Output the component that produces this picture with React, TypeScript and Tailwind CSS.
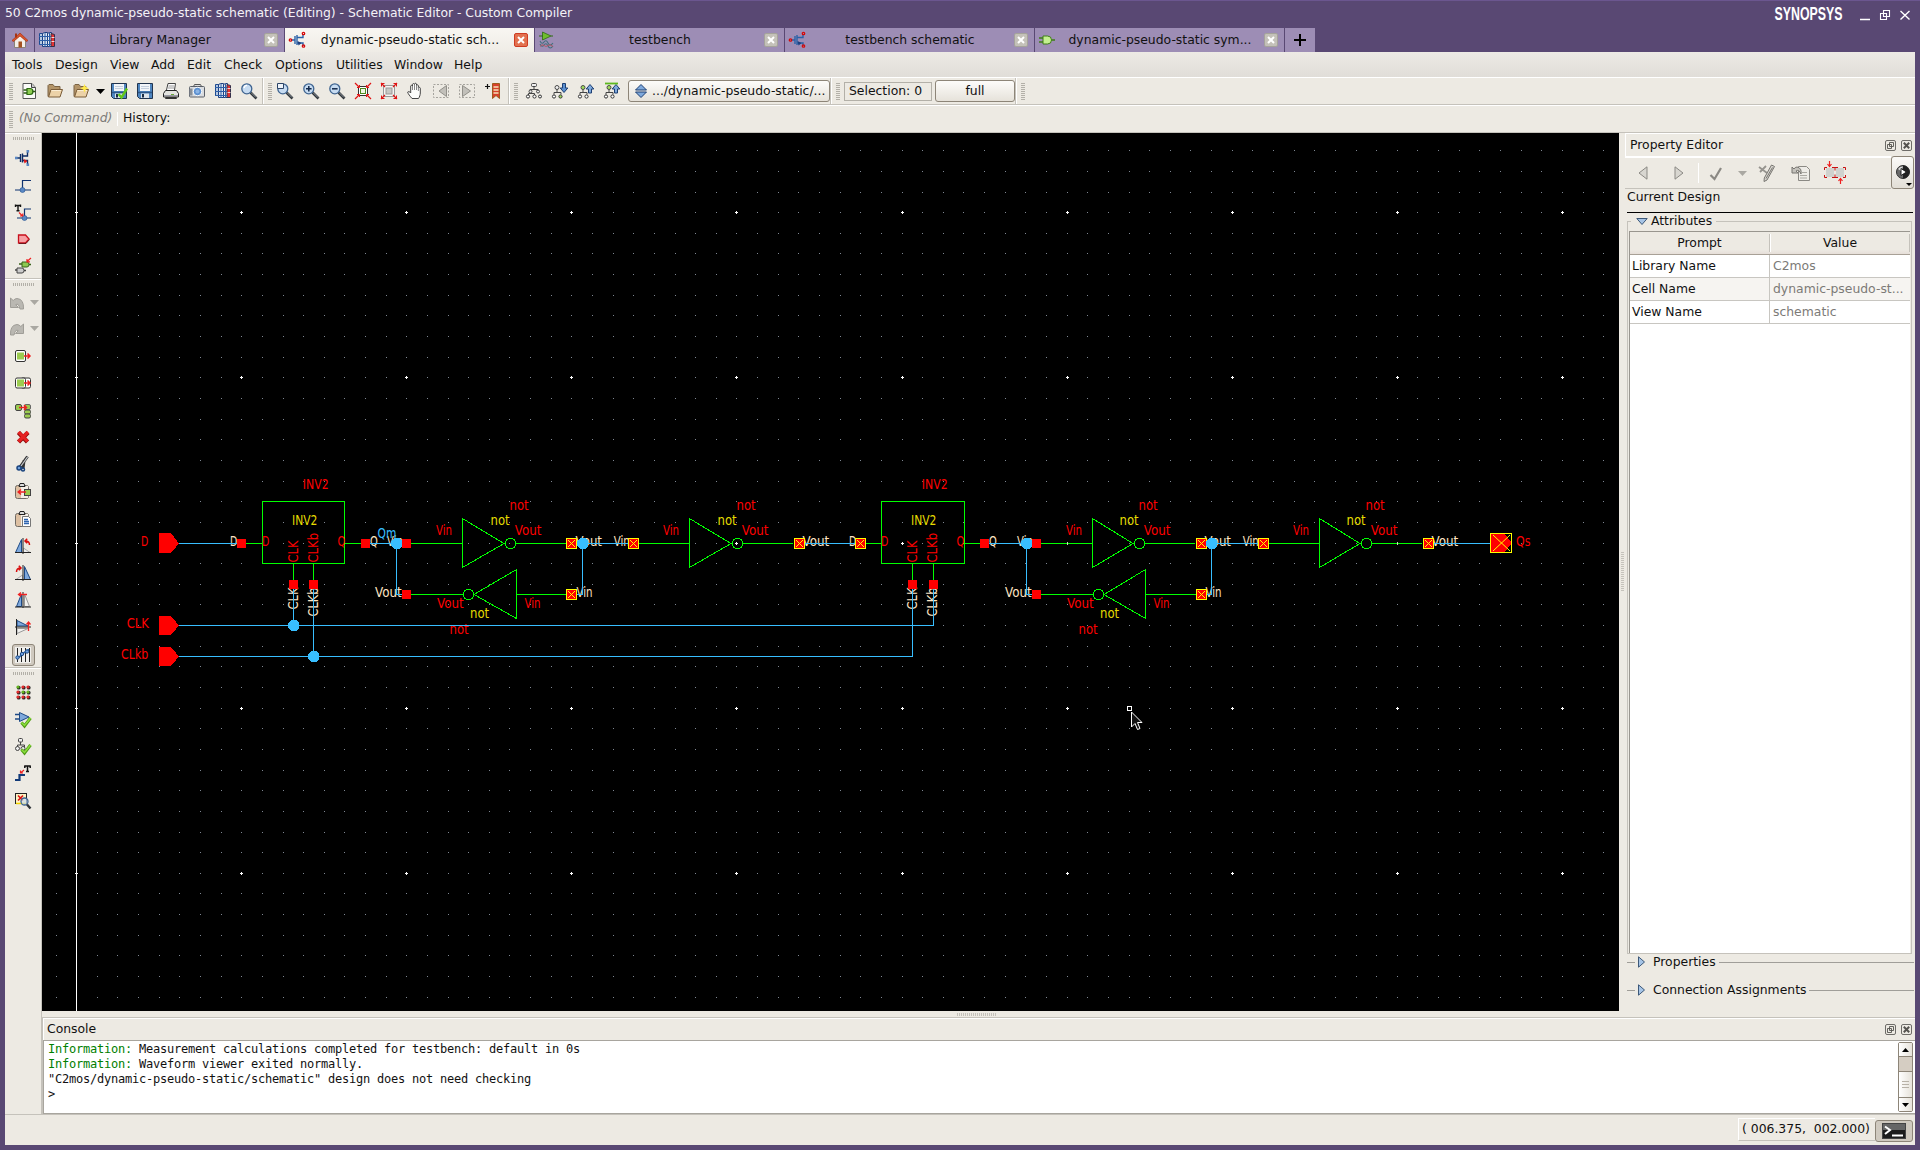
import React from "react";

type Kids = { children?: React.ReactNode };

/* ---------- shared helpers ---------- */

function Ic({ children, s = 16, h }: Kids & { s?: number; h?: number }) {
  return (
    <svg width={s} height={h ?? s} viewBox={`0 0 ${s} ${h ?? s}`} className="block shrink-0 overflow-visible" fill="none">
      {children}
    </svg>
  );
}

function Grip() {
  return (
    <div className="mr-[3px] ml-[4px] flex h-[17px] w-[4px] shrink-0 flex-col justify-between">
      {Array.from({ length: 9 }, (_, i) => (
        <div key={i} className="h-px w-full bg-[#b3b0a8]" />
      ))}
    </div>
  );
}

function GripH() {
  return (
    <div className="flex h-[3px] w-[21px] shrink-0 justify-between">
      {Array.from({ length: 11 }, (_, i) => (
        <div key={i} className="h-full w-px bg-[#b3b0a8]" />
      ))}
    </div>
  );
}

function Cell({ children }: Kids) {
  return <div className="flex w-[26px] shrink-0 items-center justify-center">{children}</div>;
}

function Sep() {
  return <div className="h-[26px] w-[2px] shrink-0 border-l border-[#c5c2bb] bg-white" />;
}

/* ---------- top tool bar icons ---------- */

const Folder = ({ star }: { star?: boolean }) => (
  <Ic>
    <path d="M1 13.500V2.500L2 1.500h4l1.500 2h5.500V6" fill="#b39468" stroke="#7a6344" />
    <path d="M1.500 14L4 6.500h11.500L13 14z" fill="#ecd2a8" stroke="#7a5c38" />
    <path d="M4.500 7.500h9.500" stroke="#fbeed6" />
    {star && <path d="M11.500 1l1.300 3 3 1.300-3 1.300-1.300 3-1.300-3-3-1.300 3-1.300z" fill="#ffe94a" />}
  </Ic>
);
const Floppy = ({ check }: { check?: boolean }) => (
  <Ic>
    <path d="M.500.500h15v15h-13l-2-2z" fill="#4f86c0" stroke="#22344e" />
    <rect x="3" y="1" width="10" height="7" fill="#f2f5f9" />
    <path d="M4 3.500h8M4 5.500h8" stroke="#c3cedd" />
    <path d="M1 9.500h14" stroke="#2d5688" strokeWidth="1.500" />
    <rect x="4" y="10.500" width="8" height="4.500" fill="#dde3ea" />
    <rect x="5" y="11" width="2" height="3.500" fill="#1a2c44" />
    {check && <path d="M7.500 11l3 3.500 5.500-9" stroke="#62c81a" strokeWidth="2.400" />}
  </Ic>
);
const Mag = ({ sign, box }: { sign?: string; box?: boolean }) => (
  <Ic>
    <path d="M9.500 9.500l6 6" stroke="#2e3338" strokeWidth="2.600" />
    <path d="M10 9.500l5 5" stroke="#9aa3ab" strokeWidth="0.900" />
    <circle cx="5.800" cy="5.800" r="5" fill="#c7dcf2" stroke="#3f6490" strokeWidth="1.300" />
    {sign === "+" && <path d="M3 5.800h5.600M5.800 3v5.600" stroke="#12284a" strokeWidth="1.500" />}
    {sign === "-" && <path d="M3 5.800h5.600" stroke="#12284a" strokeWidth="1.500" />}
    {!sign && !box && <path d="M3 5a3.200 3.200 0 0 1 3-2.600" stroke="#fff" strokeWidth="1.400" />}
    {box && <path d="M.500.500h6v5h-6z" fill="#eef3f9" stroke="#2c4466" />}
  </Ic>
);
const LibBooks = () => (
  <Ic>
    <path d="M.500 1.500h4v11h-4z" fill="#b6c8e0" stroke="#1d4a90" />
    <path d="M3.500 1.500l2-1h3v14h-5z" fill="#dbe4f0" stroke="#1d3f80" />
    <path d="M8.500 1.500l2-1h2v14h-4z" fill="#e8edf4" stroke="#1d3f80" />
    <path d="M12 1.500l3.500 1v12H12z" fill="#e23434" stroke="#34304a" />
    <path d="M0 4.500h12M0 8.500h12M0 12.500h12M6 1v14M10.500 1v14" stroke="#2d5fa8" />
    <path d="M12.500 5.500h3M12.500 9.500h3" stroke="#f6d5d5" />
  </Ic>
);
const RedArrows = ({ out }: { out?: boolean }) => (
  <Ic>
    {out ? (
      <>
        <rect x="2.500" y="2.500" width="11" height="11" fill="#f6f5f2" stroke="#999" />
        <rect x="5" y="5" width="6" height="6" fill="#c8c8c4" stroke="#999" />
      </>
    ) : (
      <>
        <rect x="3.500" y="3.500" width="9" height="9" fill="#fff" stroke="#333" />
        <rect x="5.500" y="5.500" width="5" height="5" fill="#f2f8e8" stroke="#4d8a1c" />
      </>
    )}
    <path d="M0 0l4 4M16 0l-4 4M0 16l4-4M16 16l-4-4" stroke="#e01414" strokeWidth="1.200" />
    <path
      d={out ? "M.500 3.500v-3h3M12.500 .500h3v3M.500 12.500v3h3M12.500 15.500h3v-3" : "M4.500 2v2.500H2M11.500 2v2.500H14M4.500 14v-2.500H2M11.500 14v-2.500H14"}
      stroke="#e01414"
    />
  </Ic>
);
const Tree = ({ arrow }: { arrow?: "down" | "up" | "top" }) => (
  <Ic>
    {arrow ? (
      <>
        <circle cx="5" cy="4.500" r="2" fill={arrow === "down" ? "#eee" : "#9fdc5a"} stroke="#4a4a4a" />
        <path d="M5 6.500v3M2 11.500V9.500h7v2" stroke="#444" />
      </>
    ) : (
      <>
        <rect x="5.500" y="0.500" width="5" height="3" rx="1" fill="#eee" stroke="#444" />
        <path d="M8 4v2M4 8V6.500h8V8M2.500 12v-1.500h6V12" stroke="#444" />
        <circle cx="4.500" cy="8.500" r="1.500" fill="#eee" stroke="#444" />
        <circle cx="12" cy="8.500" r="1.500" fill="#eee" stroke="#444" />
        <circle cx="14" cy="13.500" r="1.500" fill="#eee" stroke="#333" />
      </>
    )}
    <circle cx="2" cy="13.500" r="1.600" fill="#fff" stroke="#333" />
    <circle cx="8.500" cy="13.500" r="1.600" fill={arrow === "down" ? "#9fdc5a" : "#fff"} stroke="#333" />
    {arrow === "down" && <path d="M10.500.500h3v4.500h2.300L12 9.500 8.200 5h2.300z" fill="#5b8fd0" stroke="#1d3f73" />}
    {(arrow === "up" || arrow === "top") && <path d="M10.500 10h3V6h2.300L12 1.500 8.200 6h2.300z" fill="#7fa9dc" stroke="#1d3f73" />}
    {arrow === "top" && <path d="M1 .500h13" stroke="#5cb81e" strokeWidth="1.800" />}
  </Ic>
);
const Printer = () => (
  <Ic>
    <path d="M3.500 7L5 .500h7.500L11.500 7" fill="#fff" stroke="#444" />
    <path d="M5.500 3h5.500M5 5h6" stroke="#999" />
    <path d="M2.500 7.500h11l2 3v3.500h-15v-3.500z" fill="#e4e4e0" stroke="#222" />
    <path d="M1 12.500h14" stroke="#9a9aa4" />
    <path d="M2.500 14.500h11v1h-11z" fill="#f4f4f0" stroke="#333" />
    <path d="M8 11.500h3" stroke="#6aa838" />
  </Ic>
);
const Camera = () => (
  <Ic>
    <path d="M4.500 3.500l1-2h6l1 2" fill="#ddd" stroke="#555" />
    <rect x="0.500" y="3.500" width="15" height="10.500" rx="1" fill="#dadcdf" stroke="#5a5f68" />
    <path d="M.500 5.500h3v7h-3" fill="#8a9098" />
    <circle cx="8.500" cy="8.500" r="4.200" fill="#5d90d0" stroke="#f6f8fb" />
    <circle cx="8.500" cy="8.500" r="2" fill="#8ab4e6" />
  </Ic>
);
const NewDoc = () => (
  <Ic>
    <path d="M2 .500h9l3.500 4v11H2z" fill="#fbfbf8" stroke="#555" />
    <path d="M10.500.500v4h4" fill="#ccc" stroke="#444" />
    <path d="M6 5.500h3a3 3 0 0 1 0 6H6z" fill="#8ccc50" stroke="#2d6c12" strokeWidth="1.200" />
    <path d="M2.500 7h3.500M2.500 10h3.500M11.500 8.500h3" stroke="#2d5c12" strokeWidth="1.400" />
  </Ic>
);
const Hand = () => (
  <Ic>
    <path
      d="M5 15.500C3 13 1 11 .700 9c.900-1 2-.300 3 1V3c.200-1 1.500-1 1.800 0V1.500c.200-1.200 1.700-1.200 2 0V1c.300-1 1.700-1 2 0v1.500c.400-1 1.700-.800 1.900.200V5c.400-1 1.800-.800 1.900.200V10c0 2-.800 4-1.800 5.500z"
      fill="#fdfdfb"
      stroke="#444"
    />
    <path d="M5.500 3v4M7.500 2v5M9.500 2.500V7M11.400 4v4" stroke="#888" />
  </Ic>
);
const DashNav = ({ right }: { right?: boolean }) => (
  <Ic>
    <rect x="0.500" y="1.500" width="15" height="13" stroke="#a5a39d" strokeDasharray="2 1.500" />
    {right ? <path d="M3.500 2.500v11l8-5.500z" fill="#c2c0ba" stroke="#92908a" /> : <path d="M13.500 2.500v11L6 8z" fill="#c2c0ba" stroke="#92908a" />}
  </Ic>
);
const Bookmark = () => (
  <Ic>
    <path d="M0 3.500h5M2.500 1v5" stroke="#111" strokeWidth="1.200" />
    <path d="M7.500.500h7v15l-3.500-3-3.500 3z" fill="#d8402c" stroke="#a05a1c" />
    <path d="M8.500 4h5M8.500 7h5M8.500 10h5" stroke="#f5e2b8" strokeWidth="1.400" />
  </Ic>
);
const Arrow = ({ c = "#000" }: { c?: string }) => (
  <svg width="9" height="5" viewBox="0 0 9 5" className="block shrink-0">
    <path d="M0 0h9L4.500 5z" fill={c} />
  </svg>
);

/* ---------- tab icons ---------- */

const Mos = ({ add }: { add?: boolean }) => (
  <Ic>
    <path
      d={add ? "M1 8h4M5.500 4v8M7.500 3.500v9M8 6h4.500V2M8 10.500h4.500v3.500" : "M3 8h3M6 4v8M8 3v10M8 5.500h6V2M8 11h6v3"}
      stroke={add ? "#0b2c66" : "#2a62a8"}
      strokeWidth="1.400"
    />
    <path d="M8.500 9l4 2-3 2.500z" fill={add ? "#e01818" : "#1c3f80"} />
    {add ? (
      <g fill="#5b88c4">
        <rect x="0" y="6.700" width="2.600" height="2.600" />
        <rect x="11.500" y="0" width="2.600" height="2.600" />
        <rect x="11.500" y="13.400" width="2.600" height="2.600" />
      </g>
    ) : (
      <g stroke="#d80808" strokeWidth="1.300">
        <circle cx="1.500" cy="8" r="1.200" />
        <circle cx="14.500" cy="1.500" r="1.200" />
        <circle cx="14.500" cy="14" r="1.200" />
      </g>
    )}
  </Ic>
);
const Home = () => (
  <Ic>
    <path d="M2.500 8v7.500h11V8L8 3z" fill="#f3efe8" stroke="#8a8378" />
    <path d="M0 8.500L8 1l8 7.500-1.500 1L8 4 1.500 9.500z" fill="#d9532c" stroke="#a63413" strokeWidth="0.700" />
    <rect x="3" y="1.500" width="2" height="4" fill="#a63413" />
    <rect x="6.500" y="9.500" width="3.500" height="6" fill="#a4511f" />
  </Ic>
);
const Wave = () => (
  <Ic>
    <path d="M3.500 0l8.500 4-8.500 4z" fill="#6fbe2c" stroke="#2f6a12" strokeWidth="0.800" />
    <path d="M0 4h4M12 4h2" stroke="#2f6a12" />
    <path d="M1 9q2 4 4 1t4 1 5 0M1 12q2 4 4 1t4 1 5 0" stroke="#42707c" strokeWidth="1.100" />
    <path d="M1 14.500q2-3 4-1t4 0 5 1" stroke="#b8505c" strokeWidth="0.900" />
  </Ic>
);
const SymIcon = () => (
  <Ic>
    <path d="M0 6h4M0 10h4M11 8h5" stroke="#3f7c18" strokeWidth="1.500" />
    <path d="M4 4h4.500a4 4 0 0 1 0 8H4z" fill="#c4f090" stroke="#3f7c18" />
  </Ic>
);

function TabClose({ active }: { active?: boolean }) {
  return (
    <div
      className={
        active
          ? "flex h-[14px] w-[14px] items-center justify-center rounded-[2px] border border-[#cf3b22] bg-[#e2714f]"
          : "flex h-[14px] w-[14px] items-center justify-center rounded-[2px] border border-[#a5a39b] bg-[#c4c1b9]"
      }
    >
      <svg width="8" height="8" viewBox="0 0 8 8">
        <path d="M1 1l6 6M7 1L1 7" stroke="#fff" strokeWidth="2" />
      </svg>
    </div>
  );
}

function Tab({ icon, label, active }: { icon: React.ReactNode; label: string; active?: boolean }) {
  return (
    <div
      className={
        "flex w-[250px] shrink-0 items-center border-r border-[#594873] pr-[6px] pl-[4px] " +
        (active ? "bg-[linear-gradient(#f8f6f2,#efece6)]" : "bg-[#9d8db5]")
      }
    >
      {icon}
      <span className="flex-1 pl-[1px] text-center">{label}</span>
      <TabClose active={active} />
    </div>
  );
}

/* ---------- left tool bar ---------- */

const Tri = ({ flip }: { flip?: boolean }) => (
  <Ic>
    {flip ? (
      <>
        <path d="M9.500 1.500v13h6z" fill="#7fa9dc" stroke="#1d4a86" />
        <path d="M7.500 10L1 14.500h6.500z" fill="#eee" stroke="#aaa" />
      </>
    ) : (
      <>
        <path d="M6.500 1.500v13h-6z" fill="#7fa9dc" stroke="#1d4a86" />
        <path d="M8.500 10l6.500 4.500H8.500z" fill="#eee" stroke="#aaa" />
      </>
    )}
    <path d="M0 14.500h16M8 0v16" stroke="#222" />
    <path d={flip ? "M1.500 7q0-4 4-4M3.800 0.800L6 3 3.800 5.200" : "M14.500 7q0-4-4-4M12.200.800L10 3l2.200 2.200"} stroke="#d81010" strokeWidth="1.500" />
  </Ic>
);
const Clip = ({ page }: { page?: boolean }) => (
  <Ic>
    <rect x="0.500" y="2.500" width="13" height="13" rx="2" fill="#ddc0a2" stroke="#6e6a64" />
    <rect x="6" y="3" width="7" height="12" fill="#f5efe8" />
    <path d="M4 3.500h6l-1-3H5z" fill="#ddd" stroke="#222" />
    {page ? (
      <>
        <path d="M7.500 5.500h6l2 2v8h-8z" fill="#fff" stroke="#777" />
        <path d="M9 8.500h4M9 10.500h5M9 12.500h5" stroke="#2e64b0" strokeWidth="1.300" />
      </>
    ) : (
      <>
        <rect x="9.500" y="6.500" width="6" height="6" fill="#9ccc50" stroke="#444" />
        <path d="M3 9h8M6 6.500L3.200 9 6 11.500" stroke="#e22" strokeWidth="1.500" />
      </>
    )}
  </Ic>
);
const GreenSq = ({ v }: { v: number }) => (
  <Ic>
    {v === 2 ? (
      <>
        <rect x="0.500" y="2.500" width="6" height="6" rx="1.500" fill="#9ccc50" stroke="#444" />
        <rect x="9.500" y="2.500" width="6" height="5" rx="1.500" fill="#9ccc50" stroke="#666" />
        <rect x="9.500" y="8" width="6" height="4" rx="1.500" fill="#9ccc50" stroke="#444" />
        <rect x="9.500" y="12" width="6" height="4" rx="1.500" fill="#9ccc50" stroke="#444" />
        <path d="M4 5.500h7M9 3l2.500 2.500L9 8" stroke="#e22" strokeWidth="1.500" />
      </>
    ) : (
      <>
        {v === 1 && <rect x="6" y="3" width="9.500" height="10" rx="1.500" fill="#fff" stroke="#333" />}
        <rect x="0.500" y={v ? 3 : 2.500} width="10" height={v ? 10 : 11} rx="1.500" fill="#fff" stroke="#333" />
        <rect x="2" y="4.500" width="7" height="7" fill="#9ccc50" />
        <path d="M9 8h6M12.500 5.500L15 8l-2.500 2.500" stroke="#e22" strokeWidth="1.500" />
      </>
    )}
  </Ic>
);
const Undo = ({ redo }: { redo?: boolean }) => (
  <Ic>
    <g transform={redo ? "translate(16 0) scale(-1 1)" : undefined}>
      <path d="M1.500 3v9.500h8L6.700 9.700Q9.500 7.500 11 14h3.500Q15 4 8 3.500 6 3.500 4.200 5.500z" fill="#bab8b2" stroke="#a09e98" />
    </g>
  </Ic>
);

function VCell({ children }: Kids) {
  return <div className="flex h-[27.200px] shrink-0 items-center">{children}</div>;
}
function HistCell({ children }: Kids) {
  return (
    <div className="flex h-[26px] w-full shrink-0 items-center gap-[5px] pl-[4px]">
      {children}
      <Arrow c="#aaa8a2" />
    </div>
  );
}

function LeftBar() {
  return (
    <div className="flex w-[36px] shrink-0 flex-col items-center border-t border-white">
      <div className="h-[3px]" />
      <GripH />
      <div className="h-[4px]" />
      <VCell><Mos add /></VCell>
      <VCell>
        <Ic>
          <path d="M0 13h16M7.500 13V3.500H16" stroke="#0f3270" strokeWidth="1.200" />
          <circle cx="7.500" cy="13" r="2.500" fill="#5b88c4" stroke="#24508e" strokeWidth="0.600" />
        </Ic>
      </VCell>
      <VCell>
        <Ic>
          <path d="M2 14h14M9.500 14V5H16" stroke="#0f3270" strokeWidth="1.200" />
          <circle cx="9.500" cy="14" r="2.500" fill="#5b88c4" stroke="#24508e" strokeWidth="0.600" />
          <path d="M0 1.500h6M3 1v6M.500.500v2.500M5.500.500v2.500M1.500 6.800h3" stroke="#111" strokeWidth="1.400" />
          <path d="M4 8.500l3.500 3.500M7.800 9.500V12H5" stroke="#e22" strokeWidth="1.200" />
        </Ic>
      </VCell>
      <VCell>
        <Ic>
          <path d="M3.500 4h7l3.500 4-3.500 4H3.500z" fill="#f7a0a4" stroke="#c8101c" strokeWidth="1.300" />
          <path d="M4 12.500h7l3.500-4" stroke="#5a0a10" strokeWidth="0.800" />
        </Ic>
      </VCell>
      <VCell>
        <Ic>
          <path d="M7 4h5q2 0 2 2.500T12 9H7z" fill="#8cc850" stroke="#39621a" />
          <path d="M4 6h3M14 6.500h2" stroke="#39621a" strokeWidth="1.500" />
          <path d="M2 10h5q2 0 2 2.500T7 15H2z" fill="#ccc" stroke="#444" />
          <path d="M0 12h2M9 12.500h2" stroke="#444" strokeWidth="1.500" />
          <path d="M16 0l-4 3.500M12 1v2.800h3" stroke="#e22" strokeWidth="1.200" />
        </Ic>
      </VCell>
      <div className="-mt-[2px] h-[2px] w-full shrink-0 border-t border-[#c5c2bb] bg-white" />
      <div className="h-[3px]" />
      <GripH />
      <div className="h-[4px]" />
      <HistCell><Undo /></HistCell>
      <HistCell><Undo redo /></HistCell>
      <VCell><GreenSq v={0} /></VCell>
      <VCell><GreenSq v={1} /></VCell>
      <VCell><GreenSq v={2} /></VCell>
      <VCell>
        <Ic>
          <path d="M3.500 3.500l9 9.500M13 3.500L3.500 13" stroke="#8e0c0c" strokeWidth="4.500" />
          <path d="M3.500 3l9 9.500M13 3L3.500 12.500" stroke="#e62222" strokeWidth="3.200" />
        </Ic>
      </VCell>
      <VCell>
        <Ic>
          <path d="M12.500.500L5 11M9 4.500l-1 8" stroke="#333" strokeWidth="3" />
          <path d="M12.500 1L6 10" stroke="#c8ccd0" strokeWidth="1.200" />
          <circle cx="4" cy="12" r="2" fill="#6fa0dc" stroke="#1b447e" strokeWidth="1.500" />
          <circle cx="8" cy="13.500" r="1.500" stroke="#1b447e" strokeWidth="1.500" />
        </Ic>
      </VCell>
      <VCell><Clip /></VCell>
      <VCell><Clip page /></VCell>
      <VCell><Tri /></VCell>
      <VCell><Tri flip /></VCell>
      <VCell>
        <Ic>
          <path d="M6.500 2v12.500h-5z" fill="#7fa9dc" stroke="#1d4a86" />
          <path d="M9.500 2v12.500h5z" fill="#f2f2f0" stroke="#999" />
          <path d="M0 15h16M8 0v16" stroke="#222" />
          <path d="M3.500 2.500H12M6 .500L3.500 2.500 6 4.500" stroke="#e22" strokeWidth="1.300" />
        </Ic>
      </VCell>
      <VCell>
        <Ic>
          <path d="M2 1.500v5.500h11z" fill="#7fa9dc" stroke="#1d4a86" />
          <path d="M2 14.500V9.500h11z" fill="#f2f2f0" stroke="#999" />
          <path d="M0 8h16M1.500 0v16" stroke="#222" />
          <path d="M13.500 12V3.500M11.500 5.500l2-2.500 2 2.500" stroke="#e22" strokeWidth="1.300" />
        </Ic>
      </VCell>
      <div className="flex h-[27.200px] shrink-0 items-center">
        <div className="flex h-[22px] w-[23px] items-center justify-center rounded-[3px] border border-[#8d8578] bg-[#cfc9bf]">
          <Ic>
            <rect width="16" height="16" fill="#f0efec" />
            <path d="M2.500 1v14M6.500 1v14M10.500 1v14M14.500 1v14" stroke="#222" />
            <path d="M2 11q3-1 4.500-3T14 2.500" stroke="#2a62a8" strokeWidth="1.500" />
            <g fill="#6fa0dc" stroke="#1d4a86">
              <circle cx="2.500" cy="10.500" r="1.700" />
              <circle cx="7" cy="7" r="1.700" />
              <circle cx="12" cy="4.500" r="1.700" />
            </g>
          </Ic>
        </div>
      </div>
      <div className="-mt-px h-[2px] w-full shrink-0 border-t border-[#c5c2bb] bg-white" />
      <div className="h-[3px]" />
      <GripH />
      <div className="h-[3px]" />
      <VCell>
        <Ic>
          {[0, 1, 2].map((r) =>
            [0, 1, 2].map((c) => {
              const green = (r === 0 && c === 0) || (r === 1 && c > 0);
              return (
                <g key={`${r}${c}`}>
                  <circle cx={3.700 + c * 5} cy={3.700 + r * 5} r="1.900" fill="#222" />
                  <circle cx={3 + c * 5} cy={3 + r * 5} r="1.600" fill={green ? "#62b41e" : "#e02a2a"} />
                </g>
              );
            })
          )}
        </Ic>
      </VCell>
      <VCell>
        <Ic>
          <path d="M0 3.500h4M0 8h4" stroke="#1d4a86" strokeWidth="1.500" />
          <path d="M4.500 1.500L14 6l-9.500 4.500z" fill="#7fa9dc" stroke="#1d4a86" />
          <path d="M6.500 11.500l3 3.500L15.500 7" stroke="#4f9a14" strokeWidth="3" />
          <path d="M6.500 11.500l3 3L15.500 7" stroke="#8be03c" strokeWidth="1.500" />
        </Ic>
      </VCell>
      <VCell>
        <Ic>
          <rect x="3.500" y="0.500" width="4" height="3.500" rx="1" fill="#eee" stroke="#444" />
          <path d="M5.500 4v3M2.500 9V7h7v2" stroke="#444" />
          <circle cx="2.500" cy="10.500" r="2" fill="#eee" stroke="#444" />
          <circle cx="8" cy="10.500" r="2" fill="#eee" stroke="#444" />
          <path d="M6.500 11.500l3 3.500L15.500 7" stroke="#4f9a14" strokeWidth="3" />
          <path d="M6.500 11.500l3 3L15.500 7" stroke="#8be03c" strokeWidth="1.500" />
        </Ic>
      </VCell>
      <VCell>
        <Ic>
          <path d="M9.500 1h6M12.500 .500v6M9.800.500V3M15.200.500V3M11 6.500h3" stroke="#111" strokeWidth="1.500" />
          <path d="M9 5L5.500 8M5.500 5.500V8H8" stroke="#e22" strokeWidth="1.200" />
          <path d="M0 15h4.500v-5H10" stroke="#123a78" strokeWidth="2.200" />
        </Ic>
      </VCell>
      <VCell>
        <Ic>
          <rect x="0.500" y="0.500" width="11" height="10" fill="#fdf4c4" stroke="#222" />
          <path d="M1 10.500h10" stroke="#f0d000" strokeWidth="1.500" />
          <path d="M3 2.500l5 5M8 2.500l-5 5" stroke="#e01010" strokeWidth="1.600" />
          <circle cx="9.500" cy="8.500" r="3.500" fill="#c7dcf2" fillOpacity=".7" stroke="#3f6490" strokeWidth="1.300" />
          <path d="M12 11.500l3.500 4" stroke="#2e3338" strokeWidth="2.400" />
        </Ic>
      </VCell>
    </div>
  );
}

/* ---------- schematic canvas ---------- */

const GREEN = "#00ff00";
const RED = "#ff0000";
const BLUE = "#38beff";
const YEL = "#e6dc00";
const PEACH = "#ffe4c4";

const gx = (k: number) => Math.floor(76.650 + 20.635 * k);
const gy = (k: number) => Math.floor(212.700 + 20.645 * k);

function L({ x, y, w, c, t }: { x: number; y: number; w: number; c: string; t: string }) {
  return (
    <text x={x - 1} y={y} fill={c} textLength={w + 0.800} lengthAdjust="spacingAndGlyphs">
      {t}
    </text>
  );
}
function LV({ x, y, w, c, t }: { x: number; y: number; w: number; c: string; t: string }) {
  return (
    <text transform={`translate(${x} ${y}) rotate(-90)`} fill={c} textLength={w} lengthAdjust="spacingAndGlyphs">
      {t}
    </text>
  );
}
const Sq = ({ x, y }: { x: number; y: number }) => <rect x={x} y={y} width="9" height="9" fill={RED} />;
const XSq = ({ x, y }: { x: number; y: number }) => (
  <g>
    <rect x={x + 0.500} y={y + 0.500} width="10" height="10" fill={RED} stroke="#ffff00" />
    <path d={`M${x + 2} ${y + 2}l7 7m0 -7l-7 7`} stroke="#ffff00" shapeRendering="auto" />
  </g>
);
const W = ({ d, c }: { d: string; c: string }) => <path d={d} stroke={c} fill="none" />;
const Dot = ({ x, y }: { x: number; y: number }) => (
  <path d={`M${x - 2.500} ${y - 5.500}h5l3 3v5l-3 3h-5l-3 -3v-5z`} fill={BLUE} />
);

/* o: offset of the input side, e: offset of the output side */
function Fwd({ o, e }: { o: number; e: number }) {
  return (
    <g>
      <path d={`M${462.500 + o} 518.500V567.500L${504 + e} 543.500z`} stroke={GREEN} fill="none" />
      <circle cx={510.500 + e} cy="543.500" r="5.300" stroke={GREEN} fill="none" />
      <W c={GREEN} d={`M${516 + e} 543.500H${566 + e}`} />
      <L x={437 + o} y={535.300} w={15.300} c={RED} t="Vin" />
      <L x={515.700 + e} y={535.300} w={26} c={RED} t="Vout" />
      <L x={491.500 + e} y={525} w={18.300} c={YEL} t="not" />
      <L x={510.500 + e} y={510} w={18.300} c={RED} t="not" />
    </g>
  );
}

function Latch({ o, e }: { o: number; e: number }) {
  return (
    <g>
      <L x={388 + o} y={546.300} w={15} c={PEACH} t="Vin" />
      <L x={376 + o} y={597.300} w={26} c={PEACH} t="Vout" />
      <L x={577.500 + e} y={597.300} w={15.300} c={PEACH} t="Vin" />
      <L x={576.500 + e} y={546.300} w={25.700} c={PEACH} t="Vout" />
      <L x={614.700 + e} y={546.300} w={15.300} c={PEACH} t="Vin" />
      <W c={GREEN} d={`M${411 + o} 543.500H${462 + o}M${411 + o} 594.500H${463 + o}M${517 + e} 594.500H${566 + o}`} />
      <Fwd o={o} e={e} />
      <path d={`M${516.500 + e} 569.500V618.500L${474 + o} 594.500z`} stroke={GREEN} fill="none" />
      <circle cx={468.500 + o} cy="594.500" r="5.300" stroke={GREEN} fill="none" />
      <L x={438 + o} y={608} w={26} c={RED} t="Vout" />
      <L x={525.500 + e} y={608} w={15.300} c={RED} t="Vin" />
      <L x={471 + o} y={618} w={18.300} c={YEL} t="not" />
      <L x={450.500 + e} y={634.300} w={18.300} c={RED} t="not" />
      <W c={BLUE} d={`M${370 + o - (o ? 11 : 0)} 543.500H${402 + o}M${396.500 + o} 543V594.500H${402 + o}`} />
      <W c={BLUE} d={`M${577 + e} 543.500H${628 + o}M${582.500 + e} 543V594.500H${577 + e}`} />
      <Sq x={402 + o} y={539} />
      <Sq x={402 + o} y={590} />
      <XSq x={566 + o} y={538} />
      <XSq x={566 + o} y={589} />
      <Dot x={396.500 + o} y={543.500} />
      <Dot x={582.500 + e} y={543.500} />
      <W c={GREEN} d={`M${639 + o} 543.500H${689 + o}`} />
      <XSq x={628 + o} y={538} />
      <Fwd o={o + 227} e={e + 227} />
      <L x={803.500 + e} y={546.300} w={26} c={PEACH} t="Vout" />
      <XSq x={794 + e} y={538} />
    </g>
  );
}

function Inv2({ o }: { o: number }) {
  return (
    <g>
      <rect x={262.500 + o} y="501.500" width={o ? 83 : 82} height="62" stroke={GREEN} fill="none" />
      <W c={GREEN} d={`M${246 + o} 543.500H${262 + o}M${344 + o} 543.500H${361 + o}M${293.500 + o} 564V580M${313.500 + o + (o ? 1 : 0)} 564V580`} />
      <L x={303.800 + o} y={489.300} w={25} c={RED} t="INV2" />
      <L x={293 + o} y={525} w={24.600} c={YEL} t="INV2" />
      <L x={263 + o} y={546} w={6.500} c={RED} t="D" />
      <L x={338.500 + o} y={546} w={7} c={RED} t="Q" />
      <LV x={298.300 + o} y={562.500} w={22} c={RED} t="CLK" />
      <LV x={318.300 + o} y={562.500} w={29.500} c={RED} t="CLKb" />
      <LV x={298.300 + o} y={609.500} w={22} c={PEACH} t="CLK" />
      <LV x={318.300 + o} y={616.500} w={29} c={PEACH} t="CLKb" />
      <L x={231 + o} y={546} w={6.500} c={PEACH} t="D" />
      <L x={371 + o} y={546} w={7} c={PEACH} t="Q" />
      {o === 0 && <Sq x={237} y={539} />}
      <Sq x={361 + o} y={539} />
      <Sq x={289 + o} y={580} />
      <Sq x={309 + o + (o ? 1 : 0)} y={580} />
    </g>
  );
}

function Canvas() {
  const minor: string[] = [];
  const major: string[] = [];
  for (let i = -1; i <= 74; i++) {
    for (let j = -3; j <= 38; j++) {
      if (i === 0) continue;
      const x = gx(i);
      const y = gy(j);
      if (i % 8 === 0 && j % 8 === 0) {
        if (j === 16 && i !== 32 && i !== 40) continue;
        major.push(`M${x} ${y}h1v1h-1zM${x - 1} ${y}h3v1h-3zM${x} ${y - 1}h1v3h-1z`);
      } else minor.push(`M${x} ${y}h1v1h-1z`);
    }
  }
  return (
    <svg
      width="1577"
      height="878"
      viewBox="42 133 1577 878"
      className="block shrink-0 bg-black"
      fontFamily="'DejaVu Sans', sans-serif"
      fontWeight="400"
      fontSize="13.500"
      shapeRendering="crispEdges"
    >
      <path d={minor.join("")} fill="#7f8792" />
      <path d="M76 133h1v878h-1z" fill="#fff" />
      {[0, 8, 16, 24, 32].map((k) => (
        <rect key={k} x="75" y={gy(k)} width="3" height="1" fill="#fff" />
      ))}

      <path d="M159 533h12l8 10.500-8 9.500h-12zM159 616h12l8 9.500-8 9.500h-12zM159 647h12l8 9.500-8 9.500h-12z" fill={RED} />
      <L x={142} y={546} w={6.500} c={RED} t="D" />
      <L x={127.700} y={628} w={21.500} c={RED} t="CLK" />
      <L x={122} y={659} w={26.500} c={RED} t="CLkb" />

      <Inv2 o={0} />
      <Inv2 o={619} />
      <Latch o={0} e={0} />
      <Latch o={630} e={629} />

      <W c={BLUE} d="M179 543.500H237M179 625.500H933.500V589M179 656.500H912.500V589M293.500 589V625M313.500 589V656M805 543.500H855" />
      <L x={378.500} y={538} w={18} c={BLUE} t="Qm" />
      <Dot x={293.500} y={625.500} />
      <Dot x={313.500} y={656.500} />
      <XSq x={855} y={538} />
      <W c={BLUE} d="M1434 543.500H1490" />

      <path d="M1490 533h14l8 10-8 10h-14z" fill={RED} />
      <rect x="1490.500" y="533.500" width="21" height="19" fill="none" stroke="#ffff00" />
      <path d="M1493 535l17 16M1510 535l-17 16" stroke="#ffff00" shapeRendering="auto" />
      <L x={1517} y={546.300} w={13.600} c={RED} t="Qs" />

      <path d={major.join("")} fill="#fff" />
      <path d="M1067 542h1v3h-1zM1397 542h1v3h-1z" fill="#cfd8c0" />

      <rect x="1127.500" y="706.500" width="4" height="4" fill="#000" stroke="#fff" />
      <path
        d="M1131.500 712v15l3.500-3.500 2.500 6 2.500-1-2.500-6h4.500z"
        fill="#111"
        stroke="#fff"
        shapeRendering="auto"
      />
    </svg>
  );
}

/* ---------- property editor ---------- */

function DockButtons() {
  return (
    <div className="flex gap-[5px]">
      <Ic s={11}>
        <rect x="0.500" y="0.500" width="10" height="10" rx="1.500" stroke="#6e6c68" />
        <path d="M4.500 2.500h4v4h-4zM2.500 4.500h4v4h-4z" fill="#edeae3" stroke="#55534f" strokeWidth="0.900" />
      </Ic>
      <Ic s={11}>
        <rect x="0.500" y="0.500" width="10" height="10" rx="1.500" stroke="#6e6c68" />
        <path d="M2.800 2.800l5.400 5.400M8.200 2.800L2.800 8.200" stroke="#55534f" strokeWidth="2" />
      </Ic>
    </div>
  );
}

function Row({ a, b, alt }: { a: string; b: string; alt?: boolean }) {
  return (
    <div className={"flex h-[23px] items-center border-b border-[#c8c6c1] " + (alt ? "bg-[#f6f4f1]" : "")}>
      <div className="flex h-full w-[140px] items-center border-r border-[#c8c6c1] pl-[2px] text-[#111]">{a}</div>
      <div className="pl-[3px] text-[#7c7a77]">{b}</div>
    </div>
  );
}

function Collapsed({ label }: { label: string }) {
  return (
    <div className="flex h-[28px] items-center">
      <div className="h-px w-[8px] bg-[#a09e99]" />
      <svg width="7" height="12" viewBox="0 0 7 12" className="ml-[3px] block">
        <path d="M.500.800v10.400L6.500 6z" fill="#a6c4e6" stroke="#3d5878" />
      </svg>
      <span className="ml-[8px] text-[#111]">{label}</span>
      <div className="ml-[3px] h-px flex-1 bg-[#a09e99]" />
    </div>
  );
}

function PropertyEditor() {
  return (
    <div className="flex w-[290px] shrink-0 flex-col">
      <div className="flex h-[23px] items-center justify-between border-t border-l border-white pr-[3px] pl-[4px] text-[#111]">
        <span className="-mt-px">Property Editor</span>
        <DockButtons />
      </div>
      <div className="flex h-[33px]">
        <div className="flex flex-1 items-center border-b border-[#c5c2bb] border-t-2 border-t-white">
          <div className="flex w-[33px] justify-center pl-[4px]">
            <Ic s={11} h={14}><path d="M9 .800v12.400L1 7z" fill="#d8d6d0" stroke="#8b8984" /></Ic>
          </div>
          <div className="flex w-[34px] justify-center pl-[7px]">
            <Ic s={11} h={14}><path d="M2 .800v12.400L10 7z" fill="#d8d6d0" stroke="#8b8984" /></Ic>
          </div>
          <div className="ml-[6px] h-[20px] w-px bg-white" />
          <div className="ml-[10px]">
            <Ic s={13} h={13}><path d="M1.500 8l4 4L12 1" stroke="#8b8984" strokeWidth="2.200" /></Ic>
          </div>
          <div className="ml-[16px]"><Arrow c="#aaa8a2" /></div>
          <div className="ml-[11px]">
            <Ic s={17} h={18}>
              <path d="M1 3l8 6M8 2L2 8" stroke="#96948f" strokeWidth="1.800" />
              <path d="M13.500 1l3 1.500L9 16l-3 1.500.300-3.500z" fill="#d8d6d0" stroke="#777570" />
              <path d="M14.500 3.500L8 14.500" stroke="#777570" />
            </Ic>
          </div>
          <div className="ml-[16px]">
            <Ic s={19} h={17}>
              <path d="M7.500 1.500h8l3 3v11h-11z" fill="#eeece7" stroke="#8b8984" />
              <path d="M9 10.500h7M9 13h7M11 7.500h5" stroke="#aaa8a2" />
              <path d="M1 2v6h6L5 6q3-2 5 3 1-6-4-7-2 0-3 2z" fill="#c4c2bc" stroke="#777570" />
            </Ic>
          </div>
          <div className="ml-[14px]">
            <Ic s={22} h={24}>
              <rect x="2" y="7" width="8" height="9" fill="#cfd2ce" />
              <rect x="12" y="7" width="8" height="9" fill="#cfd2ce" />
              <path d="M3 6.500H.500V9M.500 14v2.500H3M8 6.500h6M8 16.500h6M19 6.500h2.500V9M21.500 14v2.500H19M11 6.500v3M11 13.500v3" stroke="#c81010" />
              <path d="M5.500 0v5M3.500 3l2 2.500 2-2.500M16.500 23v-5M14.500 20l2-2.500 2 2.500" stroke="#f02020" strokeWidth="1.200" />
            </Ic>
          </div>
        </div>
        <div className="mr-px flex w-[23px] flex-col items-center rounded-[3px] border border-[#8d8578] bg-[linear-gradient(#fbfaf8,#e2ded6)] pt-[8px]">
          <Ic s={14}>
            <circle cx="7" cy="7" r="6.500" fill="#6a6a6a" stroke="#333" />
            <path d="M7 .500a6.500 6.500 0 0 1 0 13z" fill="#222" />
            <path d="M2 4q2-3 5-2.500L5 6z" fill="#ddd" />
            <path d="M5 3.500v7L10.500 7z" fill="#fff" stroke="#111" strokeWidth="0.900" />
          </Ic>
          <div className="mt-[4px] ml-[12px]">
            <Ic s={6} h={3}><path d="M0 0h6L3 3z" fill="#000" /></Ic>
          </div>
        </div>
      </div>
      <div className="mr-[2px] ml-[2px] flex h-[24px] items-start border-b border-black text-[#111]">
        <span>Current Design</span>
      </div>
      <div className="ml-[2px] flex h-[17px] items-center">
        <div className="h-px w-[4px] bg-[#c5c2bb]" />
        <svg width="12" height="7" viewBox="0 0 12 7" className="ml-[5px] block">
          <path d="M.800.500h10.400L6 6.500z" fill="#a6c4e6" stroke="#3d5878" />
        </svg>
        <span className="-mt-px ml-[3px] text-[#111]">Attributes</span>
        <div className="ml-[4px] h-px flex-1 bg-[#c5c2bb]" />
        <div className="w-[3px]" />
      </div>
      <div className="-mt-[8px] mr-[3px] ml-[2px] flex h-[732px] flex-col border-x border-b border-[#c5c2bb] px-px pt-[9px]">
        <div className="flex flex-1 flex-col border-t border-l border-[#99968f] bg-white">
          <div className="flex h-[23px] shrink-0 items-center border-b border-[#a8a096] bg-[linear-gradient(#edeae3,#edeae3_80%,#e6dfd9)] text-[#111]">
            <div className="flex h-[18px] w-[140px] items-center justify-center border-r border-[#c5c2bb]">Prompt</div>
            <div className="flex h-[18px] flex-1 items-center justify-center border-r border-l border-r-[#c5c2bb] border-l-white">Value</div>
          </div>
          <Row a="Library Name" b="C2mos" />
          <Row a="Cell Name" b="dynamic-pseudo-st..." alt />
          <Row a="View Name" b="schematic" />
        </div>
      </div>
      <div className="mt-[-6px] mr-[1px] ml-[2px] flex flex-col">
        <Collapsed label="Properties" />
        <Collapsed label="Connection Assignments" />
      </div>
    </div>
  );
}

/* ---------- console ---------- */

function ScrollBar() {
  return (
    <div className="my-px mr-[2px] flex w-[15px] shrink-0 flex-col rounded-[2px] border border-[#8d8578] bg-[#d5cdc2]">
      <div className="flex h-[14px] items-center justify-center border-b border-[#8d8578] bg-[linear-gradient(90deg,#fff,#e6e2da)]">
        <svg width="7" height="4" viewBox="0 0 7 4"><path d="M3.500 0L7 4H0z" /></svg>
      </div>
      <div className="flex-1" />
      <div className="flex h-[27px] flex-col items-center justify-center gap-[2px] border-y border-[#8d8578] bg-[linear-gradient(90deg,#fff,#e6e2da)]">
        <div className="h-px w-[7px] bg-[#b8b2a8]" />
        <div className="h-px w-[7px] bg-[#b8b2a8]" />
        <div className="h-px w-[7px] bg-[#b8b2a8]" />
      </div>
      <div className="flex h-[13px] items-center justify-center bg-[linear-gradient(90deg,#fff,#e6e2da)]">
        <svg width="7" height="4" viewBox="0 0 7 4"><path d="M3.500 4L7 0H0z" /></svg>
      </div>
    </div>
  );
}

function Console() {
  return (
    <div className="flex flex-1 flex-col border-t border-l border-[#c5c2bb]">
      <div className="flex h-[22px] shrink-0 items-center justify-between border-t border-l border-white pr-[3px] pl-[3px] text-[#111]">
        <span className="-mt-[2px]">Console</span>
        <DockButtons />
      </div>
      <div className="flex h-[74px] shrink-0 border-t border-b border-l border-[#a8a59e] bg-white">
        <div className="flex-1 pt-[1px] pl-[4px] font-['DejaVu_Sans_Mono',monospace] text-[12px] leading-[15px] tracking-[-0.224px] whitespace-pre text-[#111]">
          <div><span className="text-[#008000]">Information:</span> Measurement calculations completed for testbench: default in 0s</div>
          <div><span className="text-[#008000]">Information:</span> Waveform viewer exited normally.</div>
          <div>"C2mos/dynamic-pseudo-static/schematic" design does not need checking</div>
          <div>&gt;</div>
        </div>
        <ScrollBar />
      </div>
    </div>
  );
}

/* ---------- page ---------- */

const MENUS: [string, string][] = [
  ["Tools", "w-[43px]"],
  ["Design", "w-[55px]"],
  ["View", "w-[41px]"],
  ["Add", "w-[36px]"],
  ["Edit", "w-[37px]"],
  ["Check", "w-[51px]"],
  ["Options", "w-[61px]"],
  ["Utilities", "w-[58px]"],
  ["Window", "w-[60px]"],
  ["Help", "w-[40px]"],
];

export default function App() {
  return (
    <div className="flex h-[1150px] w-[1920px] flex-col overflow-hidden border-t border-[#6b568f] bg-[#594873] font-['DejaVu_Sans',sans-serif] text-[12.400px] leading-[16px] whitespace-nowrap text-[#111]">
      {/* title bar */}
      <div className="flex h-[27px] shrink-0 items-center pr-[10px] pl-[5px] text-[#f4f2f7]">
        <span className="flex-1 -translate-y-[2px] tracking-[-0.025px]">50 C2mos dynamic-pseudo-static schematic (Editing) - Schematic Editor - Custom Compiler</span>
        <svg width="70" height="26" viewBox="0 0 70 26" className="mr-[16px] block" fontFamily="'Liberation Sans', sans-serif" fontSize="18.500" fontWeight="bold">
          <text x="0.500" y="18" fill="#fff" textLength="68" lengthAdjust="spacingAndGlyphs">SYNOPSYS</text>
        </svg>
        <Ic s={50} h={12}>
          <path d="M0 10.500h10M40.500 2l9 8.500M49.500 2l-9 8.500" stroke="#fff" strokeWidth="1.400" />
          <path d="M23.500 1.500h6v6h-6zM20.500 4.500h6v6h-6z" fill="#594873" stroke="#fff" strokeWidth="1.100" />
        </Ic>
      </div>
      {/* tabs */}
      <div className="ml-[5px] flex h-[24px] shrink-0">
        <div className="flex w-[30px] items-center justify-center border-r border-[#594873] bg-[#9d8db5]"><Home /></div>
        <Tab icon={<LibBooks />} label="Library Manager" />
        <Tab icon={<Mos />} label="dynamic-pseudo-static sch..." active />
        <Tab icon={<Wave />} label="testbench" />
        <Tab icon={<Mos />} label="testbench schematic" />
        <Tab icon={<SymIcon />} label="dynamic-pseudo-static sym..." />
        <div className="flex w-[30px] items-center justify-center bg-[#9d8db5]">
          <Ic s={12}><path d="M0 6h12M6 0v12" stroke="#000" strokeWidth="2" /></Ic>
        </div>
      </div>

      <div className="mx-[5px] mb-[5px] flex flex-1 flex-col bg-[#edeae3]">
        {/* menu bar */}
        <div className="flex h-[25px] shrink-0 items-center bg-[linear-gradient(#edeae5,#e0ddd8)] pl-[7px]">
          {MENUS.map(([m, w]) => (
            <div key={m} className={w}>{m}</div>
          ))}
        </div>
        {/* tool bar */}
        <div className="flex h-[28px] shrink-0 items-center border-t border-b border-t-white border-b-[#c5c2bb]">
          <Grip />
          <Cell><NewDoc /></Cell>
          <Cell><Folder /></Cell>
          <Cell><Folder star /></Cell>
          <div className="flex w-[12px] justify-center"><Arrow /></div>
          <Cell><Floppy check /></Cell>
          <Cell><Floppy /></Cell>
          <Cell><Printer /></Cell>
          <Cell><Camera /></Cell>
          <Cell><LibBooks /></Cell>
          <Cell><Mag /></Cell>
          <Sep />
          <div className="mr-[-3px]"><Grip /></div>
          <Cell><Mag box /></Cell>
          <Cell><Mag sign="+" /></Cell>
          <Cell><Mag sign="-" /></Cell>
          <Cell><RedArrows /></Cell>
          <Cell><RedArrows out /></Cell>
          <Cell><Hand /></Cell>
          <Cell><DashNav /></Cell>
          <Cell><DashNav right /></Cell>
          <Cell><Bookmark /></Cell>
          <div className="w-[2px]" />
          <Sep />
          <Grip />
          <Cell><Tree /></Cell>
          <Cell><Tree arrow="down" /></Cell>
          <Cell><Tree arrow="up" /></Cell>
          <Cell><Tree arrow="top" /></Cell>
          <div className="ml-[3px] flex h-[22px] w-[202px] items-center rounded-[3px] border border-[#8d8578] bg-[linear-gradient(#fdfcfa,#e6e2da)] pl-[6px]">
            <Ic s={12} h={14}>
              <path d="M6 .500L11.500 6H.500zM6 13.500L11.500 8H.500z" fill="#7fa9dc" stroke="#1d3f73" />
            </Ic>
            <span className="ml-[5px]">.../dynamic-pseudo-static/...</span>
          </div>
          <Sep />
          <div className="mr-px"><Grip /></div>
          <div className="flex h-[19px] w-[88px] items-center border border-[#b3b0a8] pl-[4px]">Selection: 0</div>
          <div className="ml-[3px] flex h-[22px] w-[80px] items-center justify-center rounded-[3px] border border-[#8d8578] bg-[linear-gradient(#fdfcfa,#e6e2da)]">full</div>
          <Sep />
          <Grip />
        </div>
        {/* command bar */}
        <div className="flex h-[28px] shrink-0 items-center border-t border-b border-t-white border-b-[#c5c2bb]">
          <Grip />
          <span className="-mt-[2px] ml-[3px] w-[98px] tracking-[-0.080px] text-[#7c7a77] italic">(No Command)</span>
          <div className="h-[14px] w-px bg-white" />
          <span className="-mt-[2px] ml-[5px]">History:</span>
        </div>

        <div className="flex flex-1 flex-col">
          <div className="flex flex-1">
            <LeftBar />
            <div className="w-px shrink-0 bg-[#c5c2bb]" />
            <div className="flex flex-col">
              <div className="flex">
                <Canvas />
                <div className="flex w-[6px] flex-col items-center justify-center">
                  <div className="h-[40px] w-[3px] bg-[repeating-linear-gradient(#c5c2bb_0_1px,transparent_1px_2px)]" />
                </div>
                <div className="flex h-[878px]"><PropertyEditor /></div>
              </div>
              <div className="flex h-[6px] items-center justify-center pr-[4px]">
                <div className="h-[3px] w-[39px] bg-[repeating-linear-gradient(90deg,#c5c2bb_0_1px,transparent_1px_2px)]" />
              </div>
              <Console />
            </div>
          </div>
          {/* status bar */}
          <div className="flex h-[31px] shrink-0 items-start justify-end border-t border-[#c5c2bb] pt-[3px] pr-[2px]">
            <div className="flex h-[23px] w-[137px] items-center border-t border-b border-l border-t-white border-b-[#c5c2bb] border-l-white pb-[2px] pl-[3px] whitespace-pre">( 006.375,  002.000)</div>
            <div className="mt-[2px] flex h-[22px] w-[38px] items-center justify-center rounded-[3px] border border-[#8d8578] bg-[#cfc9bf]">
              <Ic s={24} h={16}>
                <rect x="0.500" y="0.500" width="23" height="15" fill="#1c1c1c" stroke="#444" />
                <path d="M1 1h22v6H1z" fill="#666" />
                <path d="M3 3.500L8 7l-5 4M10 12.500h11" stroke="#fff" strokeWidth="2" />
              </Ic>
            </div>
          </div>
        </div>
      </div>
    </div>
  );
}
